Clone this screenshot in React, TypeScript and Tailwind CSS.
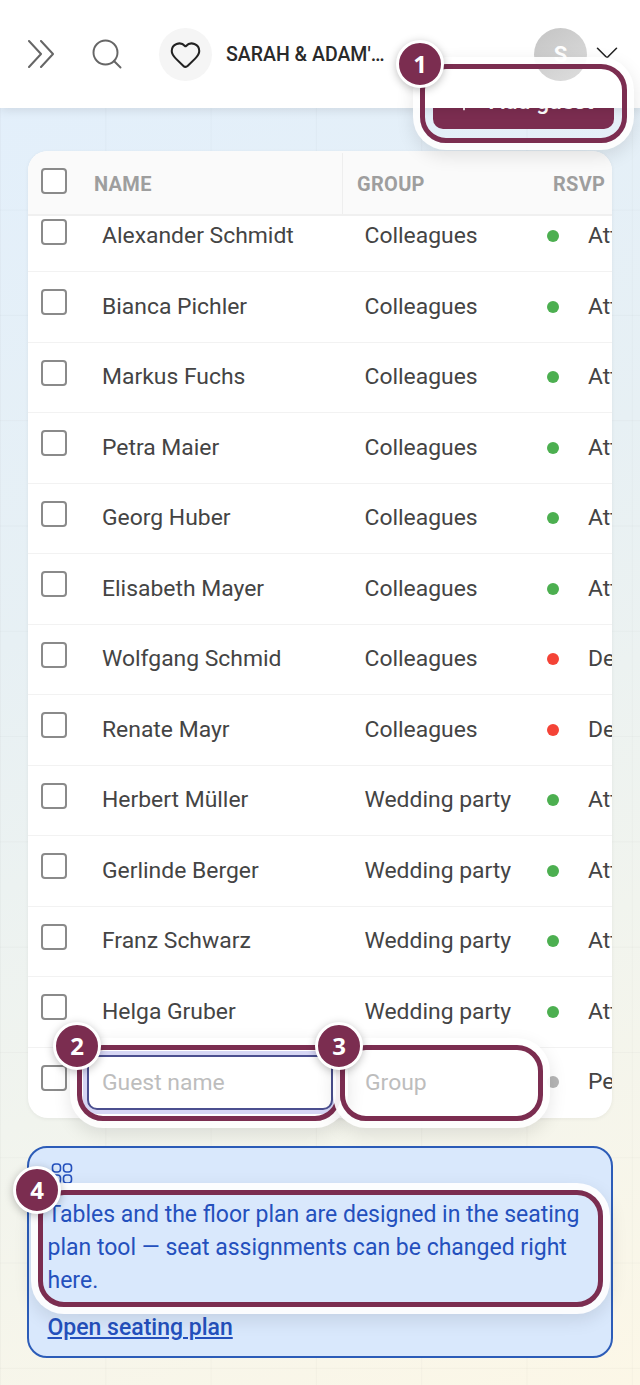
import React from 'react';
import { Search, Heart, ChevronDown, Plus } from 'lucide-react';

const guests = [
  { name: 'Alexander Schmidt', group: 'Colleagues', status: 'Attending' },
  { name: 'Bianca Pichler', group: 'Colleagues', status: 'Attending' },
  { name: 'Markus Fuchs', group: 'Colleagues', status: 'Attending' },
  { name: 'Petra Maier', group: 'Colleagues', status: 'Attending' },
  { name: 'Georg Huber', group: 'Colleagues', status: 'Attending' },
  { name: 'Elisabeth Mayer', group: 'Colleagues', status: 'Attending' },
  { name: 'Wolfgang Schmid', group: 'Colleagues', status: 'Declined' },
  { name: 'Renate Mayr', group: 'Colleagues', status: 'Declined' },
  { name: 'Herbert Müller', group: 'Wedding party', status: 'Attending' },
  { name: 'Gerlinde Berger', group: 'Wedding party', status: 'Attending' },
  { name: 'Franz Schwarz', group: 'Wedding party', status: 'Attending' },
  { name: 'Helga Gruber', group: 'Wedding party', status: 'Attending' },
];

const Checkbox: React.FC<{ className?: string }> = ({ className = '' }) => (
  <div className={`w-[26px] h-[26px] rounded-[4px] border-2 border-[#8a8a8a] bg-white ${className}`}></div>
);

const Callout: React.FC<{ className: string }> = ({ className }) => (
  <div
    className={`absolute z-20 border-[5px] border-[#7b2d50] rounded-[26px] shadow-[0_0_0_7px_rgba(255,255,255,0.92),0_6px_18px_7px_rgba(0,0,0,0.1)] ${className}`}
  ></div>
);

const Badge: React.FC<{ n: number; className: string }> = ({ n, className }) => (
  <div
    className={`absolute z-30 w-[48px] h-[48px] rounded-full bg-[#7b2d50] border-[3px] border-white shadow-[0_2px_8px_rgba(0,0,0,0.25)] flex items-center justify-center text-white text-[24px] font-bold font-['Open_Sans',sans-serif] ${className}`}
  >
    {n}
  </div>
);

export default function App() {
  return (
    <div className="relative w-[640px] h-[1385px] overflow-hidden font-['Roboto',sans-serif] bg-[linear-gradient(rgba(0,0,0,0.025)_1px,transparent_1px),linear-gradient(90deg,rgba(0,0,0,0.025)_1px,transparent_1px),linear-gradient(160deg,#e2effc_0%,#e7f0f4_40%,#f1f4ee_70%,#fcf7e7_100%)] bg-[size:105.3px_105.3px,105.3px_105.3px,100%_100%] bg-[position:0_-1px,0_0,0_0]">
      {/* Header */}
      <header className="relative z-10 h-[108px] bg-white shadow-[0_2px_10px_rgba(0,0,0,0.1)] flex items-center">
        <svg className="ml-[28px] w-[26px] h-[28px] text-[#666]" viewBox="0 0 26 28" fill="none" stroke="currentColor" strokeWidth="2" strokeLinecap="round" strokeLinejoin="round">
          <path d="M1 1l12 13L1 27" />
          <path d="M13 1l12 13-12 13" />
        </svg>
        <Search className="ml-[35px] text-[#666]" size={36} strokeWidth={1.3} />
        <div className="ml-[34px] w-[53px] h-[53px] rounded-full bg-[#f5f5f5] flex items-center justify-center">
          <Heart className="text-[#222]" size={33} strokeWidth={1.5} />
        </div>
        <div className="ml-[14px] pt-[2px] w-[160px] truncate text-[19.5px] leading-[28px] font-medium text-[#2a2a2a]">
          SARAH &amp; ADAM'S WEDDING
        </div>
        <div className="ml-[148px] w-[53px] h-[53px] rounded-full bg-[linear-gradient(145deg,#c4c4c4,#dedede)] flex items-center justify-center text-white text-[22px] font-bold">
          S
        </div>
        <ChevronDown className="ml-[1px] -mt-[2px] text-[#222]" size={38} strokeWidth={1} />
      </header>

      <main className="-mt-[32px] px-[28px]">
        {/* Add guest */}
        <div className="flex justify-end -mr-[2px]">
          <button className="w-[181px] h-[53px] rounded-[10px] bg-[#7b2d50] text-white flex items-center justify-center gap-[14px] text-[22.9px] font-medium">
            <Plus size={22} />
            Add guest
          </button>
        </div>

        {/* Guest table */}
        <section className="mt-[22px] h-[967px] bg-white rounded-[20px] overflow-hidden shadow-[0_1px_4px_rgba(0,0,0,0.06)]">
          <div className="relative z-[1] h-[65px] pt-[2px] bg-[#fafafa] border-b-2 border-[#f0f0f0] grid grid-cols-[66px_248px_211px_1fr] items-center text-[20px] font-bold text-[#9e9e9e] tracking-[0.3px]">
            <Checkbox className="ml-[13px] -mt-[6px]" />
            <div>NAME</div>
            <div className="h-full flex items-center pl-[14px] border-l border-[#eeeeee]">GROUP</div>
            <div>RSVP</div>
          </div>

          <div className="-mt-[14.5px]">
            {guests.map((g) => (
              <div
                key={g.name}
                className="h-[70.5px] border-b border-[#f2f2f2] grid grid-cols-[74px_263px_182px_1fr] items-center text-[22.9px] text-[#444]"
              >
                <Checkbox className="ml-[13px] -mt-[9px]" />
                <div>{g.name}</div>
                <div className="-ml-[0.5px]">{g.group}</div>
                <div className="flex items-center gap-[29px] whitespace-nowrap">
                  <span className={`w-[12px] h-[12px] rounded-full ${g.status === 'Declined' ? 'bg-[#f44336]' : 'bg-[#4caf50]'}`}></span>
                  {g.status}
                </div>
              </div>
            ))}

            {/* New guest row */}
            <div className="-mt-[0.5px] h-[70.5px] grid grid-cols-[74px_263px_182px_1fr] items-center text-[22.9px] text-[#444]">
              <Checkbox className="ml-[13px] -mt-[8px]" />
              <input
                placeholder="Guest name"
                className="-ml-[15px] w-[246px] h-[55px] pl-[13px] rounded-[10px] bg-white border-2 border-[#4b4f8f] shadow-[0_0_0_4px_rgba(120,120,220,0.3)] outline-none placeholder:text-[#bdbdbd]"
              />
              <input
                placeholder="Group"
                className="-ml-[15px] w-[182px] h-[55px] pl-[15px] bg-white outline-none placeholder:text-[#bdbdbd]"
              />
              <div className="flex items-center gap-[29px] whitespace-nowrap">
                <span className="w-[12px] h-[12px] rounded-full bg-[#b5b5b5]"></span>
                Pending
              </div>
            </div>
          </div>
        </section>

        {/* Seating plan note */}
        <section className="mt-[28px] -mx-[1px] h-[212px] rounded-[20px] border-2 border-[#2c5cb8] bg-[#d9e8fc] pt-[15px] pl-[18.5px] pr-[19px] text-[#2450bd] text-[23px] leading-[33px]">
          <svg className="ml-[3px] w-[22px] h-[21px]" viewBox="0 0 22 21" fill="none" stroke="currentColor" strokeWidth="1.6">
            <rect x="1.5" y="1" width="8" height="8" rx="3" />
            <rect x="12.5" y="1" width="8" height="8" rx="3" />
            <rect x="1.5" y="12" width="8" height="8" rx="3" />
            <rect x="12.5" y="12" width="8" height="8" rx="3" />
          </svg>
          <p className="mt-[14px]">
            Tables and the floor plan are designed in the seating plan tool — seat assignments can be changed right here.
          </p>
          <a className="block mt-[14px] font-medium underline">Open seating plan</a>
        </section>
      </main>

      {/* Tutorial highlights */}
      <Callout className="left-[420px] top-[64px] w-[207px] h-[79px]" />
      <Callout className="left-[77px] top-[1045px] w-[264px] h-[76px]" />
      <Callout className="left-[340px] top-[1045px] w-[203px] h-[76px]" />
      <Callout className="left-[38px] top-[1190px] w-[565px] h-[117px]" />
      <Badge n={1} className="left-[396px] top-[40px]" />
      <Badge n={2} className="left-[53px] top-[1022px]" />
      <Badge n={3} className="left-[315px] top-[1022px]" />
      <Badge n={4} className="left-[13px] top-[1166px]" />
    </div>
  );
}
